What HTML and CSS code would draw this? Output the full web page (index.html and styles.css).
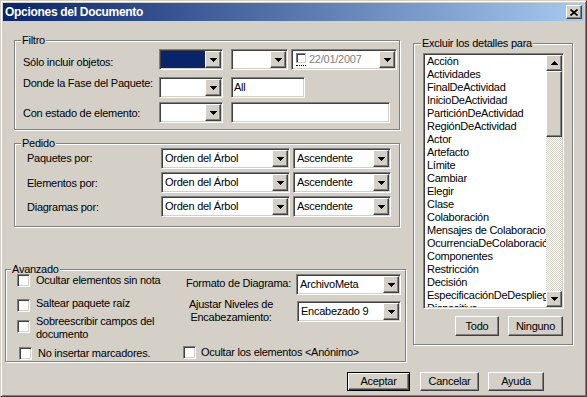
FILE: index.html
```html
<!DOCTYPE html>
<html lang="es">
<head>
  <meta charset="UTF-8">
  <title>Opciones del Documento</title>
  <link rel="stylesheet" href="styles.css">
</head>
<body>
  <div class="window">
    <div class="titlebar">
      <span class="title">Opciones del Documento</span>
      <span class="close-btn">
        <svg width="8" height="7" viewBox="0 0 8 7"><path d="M0.5 0.5 L7.5 6.5 M7.5 0.5 L0.5 6.5" stroke="#000" stroke-width="1.7"/></svg>
      </span>
    </div>

    <div class="columns">
      <div class="left-col">

        <div class="group filtro">
          <div class="group-title">Filtro</div>
          <div class="form-row row-objects">
            <span class="field-label">Sólo incluir objetos:</span>
            <div class="combo combo-type"><span class="combo-value swatch"></span><span class="drop-btn"></span></div>
            <div class="combo combo-kind"><span class="combo-value"></span><span class="drop-btn"></span></div>
            <div class="datebox">
              <span class="date-check"><span class="mini-check"></span></span>
              <span class="date-text">22/01/2007</span>
              <span class="drop-btn"></span>
            </div>
          </div>
          <div class="form-row row-phase">
            <span class="field-label">Donde la Fase del Paquete:</span>
            <div class="combo combo-type"><span class="combo-value"></span><span class="drop-btn"></span></div>
            <div class="textbox phase-field">All</div>
          </div>
          <div class="form-row row-status">
            <span class="field-label">Con estado de elemento:</span>
            <div class="combo combo-type"><span class="combo-value"></span><span class="drop-btn"></span></div>
            <div class="textbox status-field"></div>
          </div>
        </div>

        <div class="group pedido">
          <div class="group-title">Pedido</div>
          <div class="form-row order-row first">
            <span class="field-label">Paquetes por:</span>
            <div class="combo combo-order"><span class="combo-value">Orden del Árbol</span><span class="drop-btn"></span></div>
            <div class="combo combo-dir"><span class="combo-value">Ascendente</span><span class="drop-btn"></span></div>
          </div>
          <div class="form-row order-row">
            <span class="field-label">Elementos por:</span>
            <div class="combo combo-order"><span class="combo-value">Orden del Árbol</span><span class="drop-btn"></span></div>
            <div class="combo combo-dir"><span class="combo-value">Ascendente</span><span class="drop-btn"></span></div>
          </div>
          <div class="form-row order-row">
            <span class="field-label">Diagramas por:</span>
            <div class="combo combo-order"><span class="combo-value">Orden del Árbol</span><span class="drop-btn"></span></div>
            <div class="combo combo-dir"><span class="combo-value">Ascendente</span><span class="drop-btn"></span></div>
          </div>
        </div>

        <div class="group avanzado">
          <div class="group-title">Avanzado</div>
          <div class="adv-body">
            <div class="adv-checks">
              <div class="check-row r1"><span class="checkbox"></span><span class="check-label">Ocultar elementos sin nota</span></div>
              <div class="check-row r2"><span class="checkbox"></span><span class="check-label">Saltear paquete raíz</span></div>
              <div class="check-row r3"><span class="checkbox"></span><span class="check-label">Sobreescribir campos del<br>documento</span></div>
              <div class="check-row r4"><span class="checkbox"></span><span class="check-label">No insertar marcadores.</span></div>
            </div>
            <div class="adv-format">
              <div class="format-row">
                <span class="format-label">Formato de Diagrama:</span>
                <div class="combo combo-format"><span class="combo-value">ArchivoMeta</span><span class="drop-btn"></span></div>
              </div>
              <div class="levels-row">
                <span class="levels-label">Ajustar Niveles de<br>Encabezamiento:</span>
                <div class="combo combo-levels"><span class="combo-value">Encabezado 9</span><span class="drop-btn"></span></div>
              </div>
              <div class="check-row anon-row"><span class="checkbox"></span><span class="check-label">Ocultar los elementos &lt;Anónimo&gt;</span></div>
            </div>
          </div>
        </div>

      </div>

      <div class="right-col">
        <div class="group excluir">
          <div class="group-title">Excluir los detalles para</div>
          <div class="listbox">
            <div class="list-items">
              <div>Acción</div>
              <div>Actividades</div>
              <div>FinalDeActividad</div>
              <div>InicioDeActividad</div>
              <div>ParticiónDeActividad</div>
              <div>RegiónDeActividad</div>
              <div>Actor</div>
              <div>Artefacto</div>
              <div>Límite</div>
              <div>Cambiar</div>
              <div>Elegir</div>
              <div>Clase</div>
              <div>Colaboración</div>
              <div>Mensajes de Colaboracion</div>
              <div>OcurrenciaDeColaboración</div>
              <div>Componentes</div>
              <div>Restricción</div>
              <div>Decisión</div>
              <div>EspecificaciónDeDespliegue</div>
              <div>Dispositivo</div>
            </div>
            <div class="scrollbar">
              <span class="sb-btn sb-up"></span>
              <span class="sb-thumb"></span>
              <span class="sb-track"></span>
              <span class="sb-btn sb-down"></span>
            </div>
          </div>
          <div class="excl-buttons">
            <span class="btn btn-todo">Todo</span>
            <span class="btn btn-ninguno">Ninguno</span>
          </div>
        </div>
      </div>
    </div>

    <div class="footer">
      <span class="btn btn-default btn-aceptar">Aceptar</span>
      <span class="btn btn-cancelar">Cancelar</span>
      <span class="btn btn-ayuda">Ayuda</span>
    </div>
  </div>
</body>
</html>
```

FILE: styles.css
```css
body {
  margin: 0;
  background: #d4d0c8;
  font-family: "Liberation Sans", Arial, sans-serif;
  font-size: 11px;
  line-height: 13px;
  letter-spacing: -0.25px;
  color: #000;
}

/* window frame */
.window {
  width: 587px;
  height: 397px;
  box-sizing: border-box;
  padding: 2px;
  border: 1px solid;
  border-color: #d4d0c8 #404040 #404040 #d4d0c8;
  box-shadow: inset 1px 1px 0 #fff, inset -1px -1px 0 #808080;
  background: #d4d0c8;
  overflow: hidden;
}
.titlebar {
  height: 18px;
  display: flex;
  align-items: center;
  padding: 0 2px;
  background: linear-gradient(to right, #0a246a, #a6caf0);
}
.title {
  flex: 1;
  color: #fff;
  font-weight: bold;
  font-size: 12px;
  letter-spacing: -0.3px;
}

/* 3d looks */
.close-btn, .drop-btn, .btn, .sb-btn, .sb-thumb {
  box-sizing: border-box;
  background: #d4d0c8;
  border: 1px solid;
  border-color: #fff #404040 #404040 #fff;
  box-shadow: inset -1px -1px 0 #808080, inset 1px 1px 0 #d4d0c8;
}
.combo, .textbox, .datebox, .checkbox, .listbox {
  box-sizing: border-box;
  background: #fff;
  border: 1px solid;
  border-color: #808080 #fff #fff #808080;
  box-shadow: inset 1px 1px 0 #404040, inset -1px -1px 0 #d4d0c8;
}

.close-btn {
  width: 16px;
  height: 14px;
  display: flex;
  align-items: center;
  justify-content: center;
}
.close-btn svg {
  display: block;
}

.drop-btn, .sb-btn {
  display: flex;
  align-items: center;
  justify-content: center;
  flex: none;
}
.drop-btn {
  width: 16px;
  align-self: stretch;
}
.drop-btn::after, .sb-down::after, .sb-up::after {
  content: "";
  width: 7px;
  height: 4px;
  background:
    linear-gradient(#000, #000) 0 0 / 7px 1px no-repeat,
    linear-gradient(#000, #000) 1px 1px / 5px 1px no-repeat,
    linear-gradient(#000, #000) 2px 2px / 3px 1px no-repeat,
    linear-gradient(#000, #000) 3px 3px / 1px 1px no-repeat;
}
.sb-up::after {
  transform: scaleY(-1);
}

/* group boxes */
.group {
  box-sizing: border-box;
  border: 1px solid #808080;
  box-shadow: inset 1px 1px 0 #fff, 1px 1px 0 #fff;
}
.group-title {
  width: fit-content;
  margin: -7px 0 -6px 6px;
  padding: 0 1px;
  background: #d4d0c8;
}

.columns {
  display: flex;
}
.left-col {
  flex: none;
  width: 401px;
  margin-left: 2px;
}
.right-col {
  margin: 22px 0 0 7px;
}

/* form rows */
.form-row {
  display: flex;
  align-items: flex-start;
  height: 21px;
}
.field-label {
  flex: none;
  white-space: nowrap;
}
.combo, .textbox, .datebox {
  display: flex;
  height: 21px;
  padding: 1px;
  flex: none;
}
.combo-value {
  flex: 1;
  padding-left: 2px;
  line-height: 17px;
  white-space: nowrap;
  overflow: hidden;
}
.combo-value.swatch {
  background: #0a246a;
}
.textbox {
  padding-left: 2px;
  line-height: 17px;
}

.filtro {
  width: 386px;
  height: 90px;
  margin: 19px 0 0 9px;
}
.filtro .form-row {
  padding-left: 8px;
}
.filtro .field-label {
  width: 136px;
}
.row-objects { margin-top: 8px; }
.row-objects .field-label { margin-top: 7px; }
.row-phase { margin-top: 7px; }
.row-status { margin-top: 4px; }
.row-status .field-label { margin-top: 5px; }

.combo-type { width: 64px; }
.combo-kind { width: 57px; margin-left: 8px; }
.phase-field { width: 74px; margin-left: 8px; }
.status-field { width: 159px; margin-left: 8px; }

.datebox {
  width: 106px;
  margin-left: 3px;
  align-items: flex-start;
}
.date-check {
  margin: 2px 0 0 3px;
  padding-bottom: 2px;
  border-bottom: 1px dotted #000;
}
.mini-check {
  display: block;
  width: 10px;
  height: 10px;
  box-sizing: border-box;
  background: #fff;
  border: 1px solid;
  border-color: #808080 #d4d0c8 #d4d0c8 #808080;
  box-shadow: inset 1px 1px 0 #404040;
}
.date-text {
  flex: 1;
  margin-left: 3px;
  line-height: 17px;
  color: #808080;
}

.pedido {
  width: 386px;
  height: 84px;
  margin: 13px 0 0 9px;
}
.order-row {
  padding-left: 12px;
  margin-top: 3px;
}
.order-row.first { margin-top: 4px; }
.order-row .field-label {
  width: 134px;
  margin-top: 5px;
}
.order-row.first .field-label { margin-top: 4px; }
.combo-order { width: 129px; }
.combo-dir { width: 98px; margin-left: 3px; }

/* avanzado */
.avanzado {
  width: 401px;
  height: 93px;
  margin-top: 42px;
}
.avanzado .group-title {
  margin-left: 5px;
}
.adv-body {
  display: flex;
}
.adv-checks {
  flex: none;
  width: 166px;
  padding-left: 11px;
}
.check-row {
  display: flex;
  align-items: flex-start;
  height: 13px;
}
.checkbox {
  flex: none;
  width: 13px;
  height: 13px;
}
.check-label {
  margin-left: 6px;
  white-space: nowrap;
}
.r1 { margin-top: 4px; }
.r2 { margin-top: 12px; }
.r2 .check-label { margin-top: -2px; }
.r3 { margin-top: 8px; }
.r3 .check-label { margin-top: -5px; }
.r4 { margin-top: 14px; padding-left: 2px; }

.adv-format {
  flex: 1;
}
.format-row, .levels-row {
  display: flex;
  align-items: flex-start;
  height: 21px;
}
.format-row { margin-top: 4px; }
.format-label {
  width: 113px;
  box-sizing: border-box;
  padding-left: 3px;
  margin-top: 3px;
  white-space: nowrap;
}
.combo-format { width: 105px; }
.levels-row { margin-top: 6px; }
.levels-label {
  width: 96px;
  margin-top: -3px;
  line-height: 12.5px;
  text-align: center;
}
.combo-levels { width: 104px; margin-left: 18px; }
.anon-row { margin-top: 24px; }
.anon-row .check-label { margin-left: 5px; }

/* excluir */
.excluir {
  width: 160px;
  height: 302px;
}
.excluir .group-title {
  margin-left: 7px;
}
.listbox {
  display: flex;
  width: 141px;
  height: 256px;
  padding: 1px;
  margin: 9px 0 0 9px;
}
.list-items {
  flex: 1;
  overflow: hidden;
  padding-left: 2px;
  white-space: nowrap;
}
.scrollbar {
  flex: none;
  width: 16px;
  display: flex;
  flex-direction: column;
}
.sb-btn { height: 16px; }
.sb-thumb { flex: none; height: 66px; }
.sb-track {
  flex: 1;
  background: repeating-conic-gradient(#d4d0c8 0 25%, #fff 0 50%) 0 0 / 2px 2px;
}
.excl-buttons {
  display: flex;
  gap: 9px;
  margin: 7px 0 0 41px;
}

/* push buttons */
.btn {
  display: flex;
  align-items: center;
  justify-content: center;
  flex: none;
  height: 19px;
}
.btn-todo { width: 44px; height: 20px; }
.btn-ninguno { width: 55px; height: 20px; }
.btn-default {
  border-color: #000;
  box-shadow: inset 1px 1px 0 #fff, inset -1px -1px 0 #404040, inset -2px -2px 0 #808080;
}

.footer {
  display: flex;
  margin-top: 10px;
  padding-left: 344px;
}
.btn-aceptar { width: 63px; }
.btn-cancelar { width: 59px; margin-left: 10px; }
.btn-ayuda { width: 56px; margin-left: 9px; }
```
